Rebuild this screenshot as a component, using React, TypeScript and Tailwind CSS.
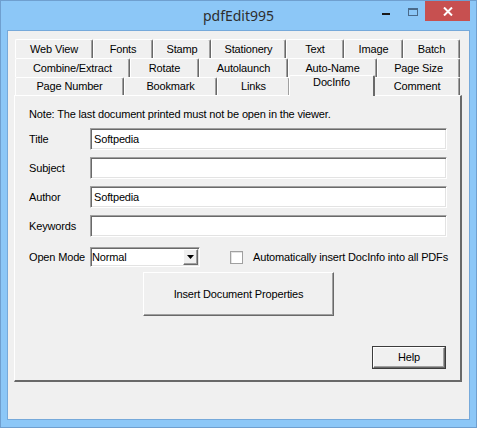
import React from "react";

const raised =
  "border border-t-white border-l-white border-b-[#696969] border-r-[#696969] shadow-[inset_-1px_-1px_0_#a0a0a0]";
const sunken =
  "border border-t-[#a0a0a0] border-l-[#a0a0a0] border-b-white border-r-white shadow-[inset_1px_1px_0_#696969,inset_-1px_-1px_0_#e3e3e3]";

type Tab = { label: string; w: number };

const row1: Tab[] = [
  { label: "Web View", w: 78 },
  { label: "Fonts", w: 60 },
  { label: "Stamp", w: 58 },
  { label: "Stationery", w: 75 },
  { label: "Text", w: 58 },
  { label: "Image", w: 59 },
  { label: "Batch", w: 57 },
];
const row2: Tab[] = [
  { label: "Combine/Extract", w: 115 },
  { label: "Rotate", w: 69 },
  { label: "Autolaunch", w: 89 },
  { label: "Auto-Name", w: 89 },
  { label: "Page Size", w: 83 },
];
const row3: Tab[] = [
  { label: "Page Number", w: 109 },
  { label: "Bookmark", w: 93 },
  { label: "Links", w: 73 },
  { label: "DocInfo", w: 84 },
  { label: "Comment", w: 86 },
];

function TabItem({ t, h }: { t: Tab; h: string }) {
  if (t.label === "DocInfo") {
    return (
      <div
        className="relative z-10 -mx-[1px] -mt-[2px] -mb-[1px] flex h-[21px] items-start justify-center rounded-t-[2px] border-l border-t border-r-2 border-l-white border-t-white border-r-[#696969] bg-[#f0f0f0] pt-[1px]"
        style={{ width: t.w + 2 }}
      >
        {t.label}
      </div>
    );
  }
  return (
    <div
      className={`flex ${h} items-center justify-center rounded-t-[2px] border-l border-t border-r border-l-white border-t-white border-r-[#696969] bg-[#f0f0f0] shadow-[inset_-1px_0_0_#a0a0a0]`}
      style={{ width: t.w }}
    >
      {t.label}
    </div>
  );
}

function Field({ label, value }: { label: string; value?: string }) {
  return (
    <div className="flex h-[22px] items-center">
      <div className="w-[61px]">{label}</div>
      <div className={`flex h-[22px] w-[357px] items-center bg-white pl-[3px] ${sunken}`}>
        {value}
      </div>
    </div>
  );
}

export default function App() {
  return (
    <div
      className="flex h-[428px] w-[477px] flex-col border border-[#6f9fcf] bg-[#8cc7f7] text-[11px] tracking-[-0.16px] text-black"
      style={{ fontFamily: '"Liberation Sans", Arial, sans-serif' }}
    >
      {/* title bar */}
      <div className="relative flex h-[29px] items-center justify-center">
        <span
          className="-mt-[1px] text-[14px] tracking-normal text-[#2e2e2e]"
          style={{ fontFamily: '"Noto Sans", "Open Sans", sans-serif' }}
        >
          pdfEdit995
        </span>
        <div className="absolute right-[6px] top-0 flex items-start">
          <div className="mr-[18px] mt-[12px] h-[2px] w-[8px] bg-[#1a1a1a]" />
          <div className="mr-[7px] mt-[7px] h-[8px] w-[10px] border border-t-2 border-[#4a6a8a]" />
          <div className="flex h-[20px] w-[45px] items-center justify-center bg-[#c75050]">
            <svg width="10" height="9" viewBox="0 0 10 9">
              <path d="M1 0.5 L9 8.5 M9 0.5 L1 8.5" stroke="white" strokeWidth="2" />
            </svg>
          </div>
        </div>
      </div>

      {/* client area */}
      <div className="mx-[6px] mb-[7px] flex flex-1 flex-col border border-[#76a9da] bg-[#f0f0f0] pl-[6px] pt-[8px]">
        {/* tabs */}
        <div className="flex w-[448px] flex-col leading-none">
          <div className="ml-[1px] flex">
            {row1.map((t) => (
              <TabItem key={t.label} t={t} h="h-[19px]" />
            ))}
          </div>
          <div className="ml-[1px] flex">
            {row2.map((t) => (
              <TabItem key={t.label} t={t} h="h-[19px]" />
            ))}
          </div>
          <div className="ml-[1px] flex h-[18px] items-end">
            {row3.map((t) => (
              <TabItem key={t.label} t={t} h="h-[18px]" />
            ))}
          </div>
        </div>

        {/* panel */}
        <div className="flex h-[287px] w-[448px] flex-col border-l border-t border-r-2 border-b-2 border-l-white border-t-white border-r-[#696969] border-b-[#696969] pl-[14px]">
          <div className="mt-[11px] h-[14px] leading-[14px]">
            Note: The last document printed must not be open in the viewer.
          </div>
          <div className="mt-[7px] flex flex-col gap-[7px]">
            <Field label="Title" value="Softpedia" />
            <Field label="Subject" />
            <Field label="Author" value="Softpedia" />
            <Field label="Keywords" />
          </div>
          <div className="mt-[10px] flex h-[20px] items-center">
            <div className="w-[61px]">Open Mode</div>
            <div className={`flex h-[20px] w-[110px] items-center bg-white pl-[1px] ${sunken}`}>
              <span className="flex-1">Normal</span>
              <div className={`mr-[1px] flex h-[16px] w-[15px] items-center justify-center bg-[#f0f0f0] ${raised}`}>
                <svg width="7" height="4" viewBox="0 0 7 4">
                  <path d="M0 0 H7 L3.5 4 Z" fill="black" />
                </svg>
              </div>
            </div>
            <div className="ml-[30px] h-[13px] w-[13px] border border-[#a0a0a0] bg-white shadow-[inset_1px_1px_0_#e3e3e3]" />
            <div className="ml-[10px]">Automatically insert DocInfo into all PDFs</div>
          </div>
          <div
            className={`ml-[114px] mt-[5px] flex h-[44px] w-[191px] items-center justify-center bg-[#f0f0f0] ${raised}`}
          >
            Insert Document Properties
          </div>
          <div className="mt-[30px] flex justify-end pr-[14px]">
            <div className="border border-[#3c3c3c]">
              <div className={`flex h-[21px] w-[72px] items-center justify-center bg-[#f0f0f0] ${raised}`}>
                Help
              </div>
            </div>
          </div>
        </div>
      </div>
    </div>
  );
}
